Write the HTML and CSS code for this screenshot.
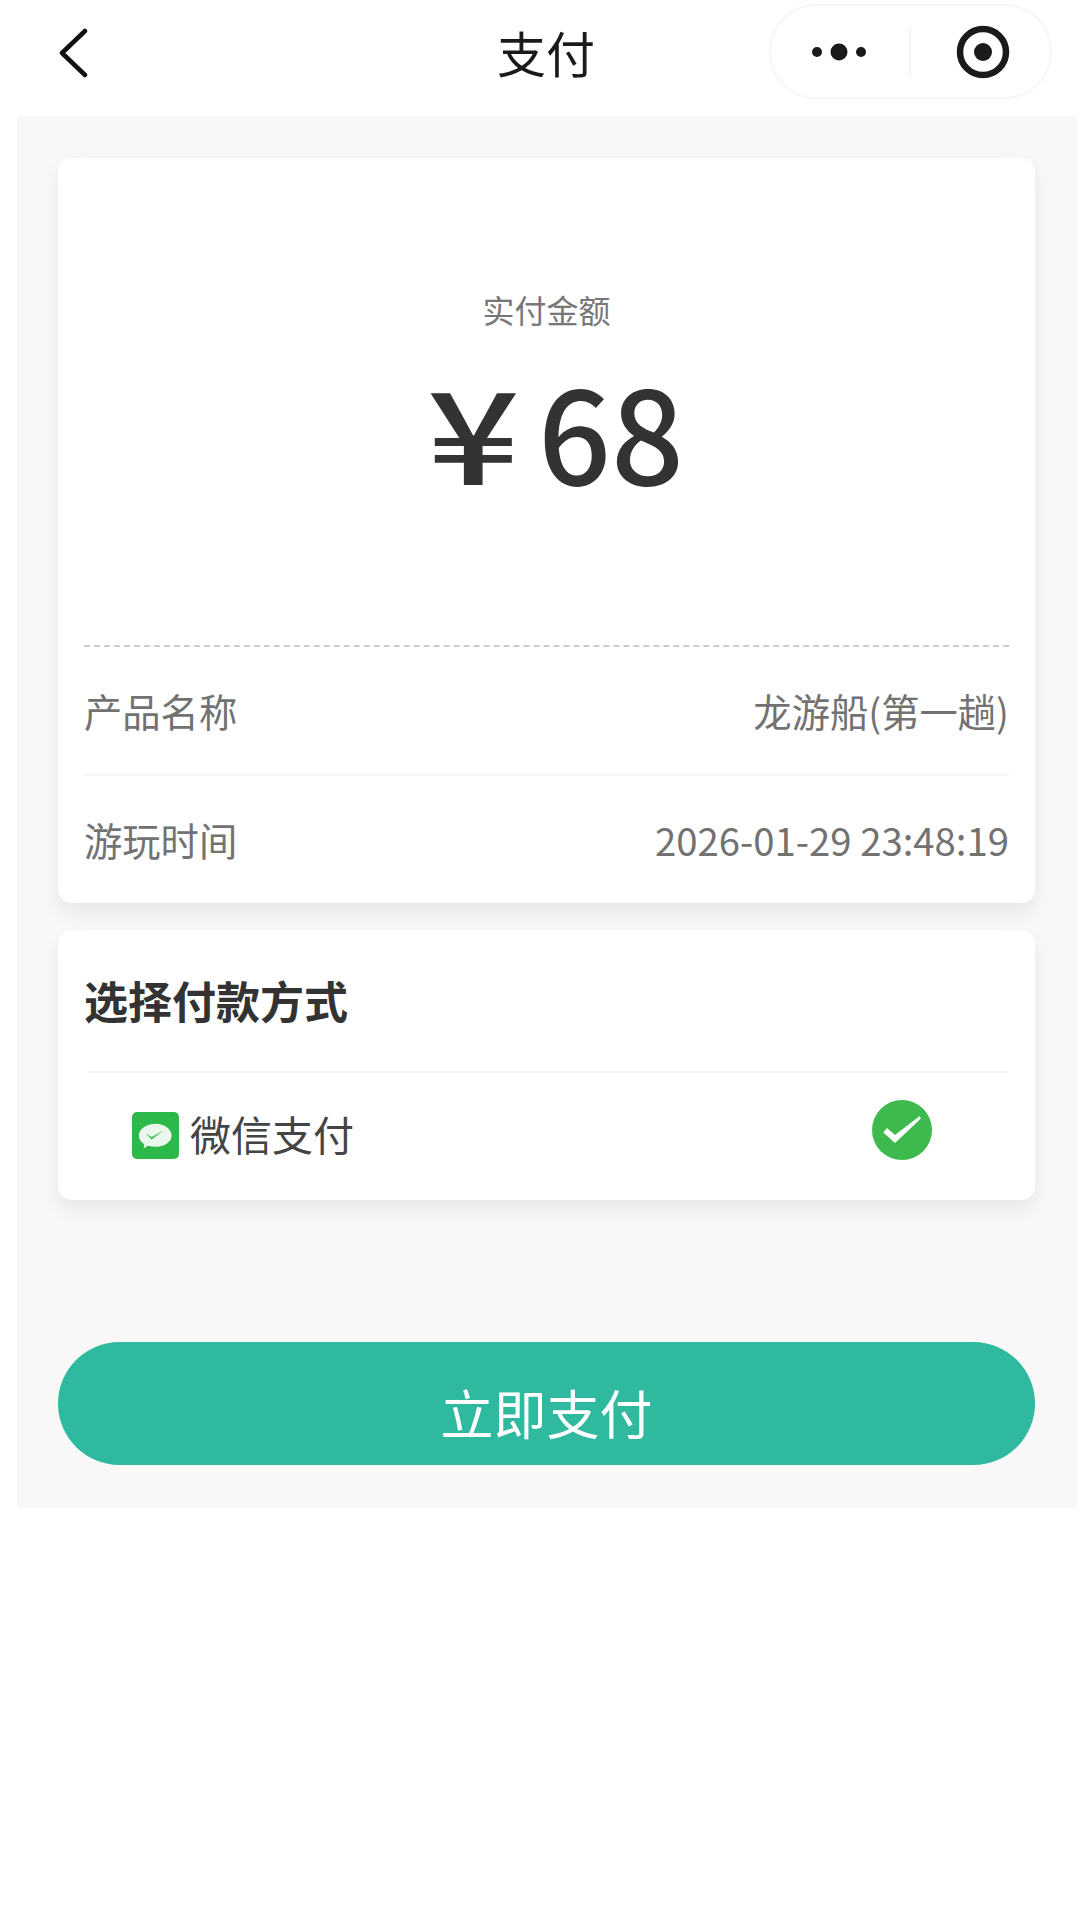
FILE: index.html
```html
<!DOCTYPE html>
<html lang="zh">
<head>
<meta charset="utf-8">
<title>支付</title>
<link rel="stylesheet" href="styles.css">
</head>
<body>
<header class="nav">
  <svg class="back" width="32" height="50" viewBox="0 0 32 50"><path d="M27 3 L4 25 L27 47" fill="none" stroke="#111" stroke-width="4.500" stroke-linecap="round" stroke-linejoin="round"/></svg>
  <h1 class="nav-title">支付</h1>
  <div class="capsule">
    <svg class="more" width="56" height="20" viewBox="0 0 56 20"><circle cx="6" cy="10" r="5" fill="#1a1a1a"/><circle cx="28" cy="10" r="8.500" fill="#1a1a1a"/><circle cx="50" cy="10" r="5" fill="#1a1a1a"/></svg>
    <span class="capsule-sep"></span>
    <svg class="target" width="54" height="54" viewBox="0 0 54 54"><circle cx="27" cy="27" r="23" fill="none" stroke="#1a1a1a" stroke-width="6.500"/><circle cx="27" cy="27" r="9" fill="#1a1a1a"/></svg>
  </div>
</header>
<main class="page">
  <section class="card amount-card">
    <div class="amount-head">
      <p class="amount-label">实付金额</p>
      <p class="amount-value"><span class="currency">¥</span><span class="digits">68</span></p>
    </div>
    <div class="row row-dashed"><span>产品名称</span><span>龙游船(第一趟)</span></div>
    <div class="row row-line"><span>游玩时间</span><span>2026-01-29 23:48:19</span></div>
  </section>
  <section class="card pay-card">
    <h2 class="pay-title">选择付款方式</h2>
    <div class="pay-rule"></div>
    <div class="pay-option">
      <svg class="wechat" width="47" height="47" viewBox="0 0 48 48"><rect width="48" height="48" rx="5" fill="#2db84a"/><path d="M24 12c-9.200 0-17 5.300-17 12 0 3.700 2.200 6.800 5.500 9l-.5 4 4.500-2.500c2.200.7 4.700 1.100 7.500 1.100 9.200 0 16.500-5.300 16.500-11.600S33.200 12 24 12z" fill="#eaf7ec"/><path d="M14 21.500l6 4.200L32 18.800l-12 9.200z" fill="#2db84a"/></svg>
      <span class="pay-name">微信支付</span>
      <svg class="check" width="60" height="60" viewBox="0 0 60 60"><circle cx="30" cy="30" r="30" fill="#3eb94d"/><path d="M15 28L23 35 47.700 16 48.700 18.800 23 43 11.300 32.400z" fill="#fff"/></svg>
    </div>
  </section>
  <button class="pay-btn" type="button">立即支付</button>
</main>
</body>
</html>
```

FILE: styles.css
```css
* { box-sizing: border-box; }
html, body { margin: 0; padding: 0; background: #fff; }
body {
  width: 1080px;
  min-height: 1920px;
  font-family: "Noto Sans CJK SC", "Noto Sans", sans-serif;
  color: #333;
}
p, h1, h2 { margin: 0; font-weight: normal; }

.nav {
  height: 116px;
  position: relative;
  display: flex;
  align-items: center;
  justify-content: space-between;
  padding: 0 28px 10px 58px;
}
.nav-title {
  position: absolute;
  left: 12px;
  right: 0;
  top: 18px;
  text-align: center;
  font-size: 49px;
  line-height: 68px;
  color: #1a1a1a;
}
.capsule {
  width: 283px;
  height: 95px;
  margin-top: -3px;
  border: 2px solid #f6f6f6;
  border-radius: 48px;
  display: flex;
  align-items: center;
  padding-left: 40px;
  background: #fff;
}
.capsule-sep {
  width: 2px;
  height: 50px;
  background: #f5f5f5;
  margin-left: 42px;
}
.target { margin-left: 45px; }

.page {
  margin: 0 2px 0 17px;
  height: 1392px;
  background: #f8f8f8;
  padding: 42px 43px 0 41px;
}
.card {
  background: #fff;
  border-radius: 14px;
  box-shadow: 0 10px 20px rgba(0,0,0,.07);
  padding: 0 26px;
}
.amount-card { height: 745px; }
.amount-head {
  height: 487px;
  text-align: center;
  padding-top: 129px;
}
.amount-label {
  font-size: 32px;
  line-height: 44px;
  color: #777;
}
.amount-value {
  margin-top: 24px;
  padding-left: 18px;
  line-height: 150px;
  color: #333;
  display: flex;
  justify-content: center;
  align-items: baseline;
  gap: 38px;
}
.currency {
  display: inline-block;
  font-size: 128px;
  font-weight: 500;
  transform: scaleX(1.27);
  transform-origin: left center;
}
.digits { font-size: 128px; font-weight: 500; }
.row {
  display: flex;
  justify-content: space-between;
  align-items: center;
  font-size: 38.300px;
  color: #727272;
  height: 129px;
}
.row-dashed { border-top: 2px dashed #ccc; }
.row-line { border-top: 2px solid #f6f6f6; }

.pay-card {
  margin-top: 27px;
  height: 270px;
}
.pay-title {
  height: 141px;
  font-size: 44px;
  font-weight: 700;
  line-height: 140px;
  color: #333;
}
.pay-rule {
  height: 2px;
  margin-left: 4px;
  background: #f4f4f4;
}
.pay-option {
  display: flex;
  align-items: center;
  padding-left: 48px;
  height: 127px;
}
.pay-name {
  font-size: 41px;
  color: #444;
  margin-left: 11px;
  margin-bottom: 7px;
  line-height: 118px;
}
.wechat { margin-top: -2px; }
.check { margin-left: auto; margin-right: 77px; margin-top: -14px; }

.pay-btn {
  display: block;
  width: 100%;
  height: 123px;
  margin-top: 142px;
  border: 0;
  border-radius: 62px;
  background: #2fba9f;
  color: #fff;
  font-family: inherit;
  font-size: 53px;
  padding: 16px 0 0;
}
```
